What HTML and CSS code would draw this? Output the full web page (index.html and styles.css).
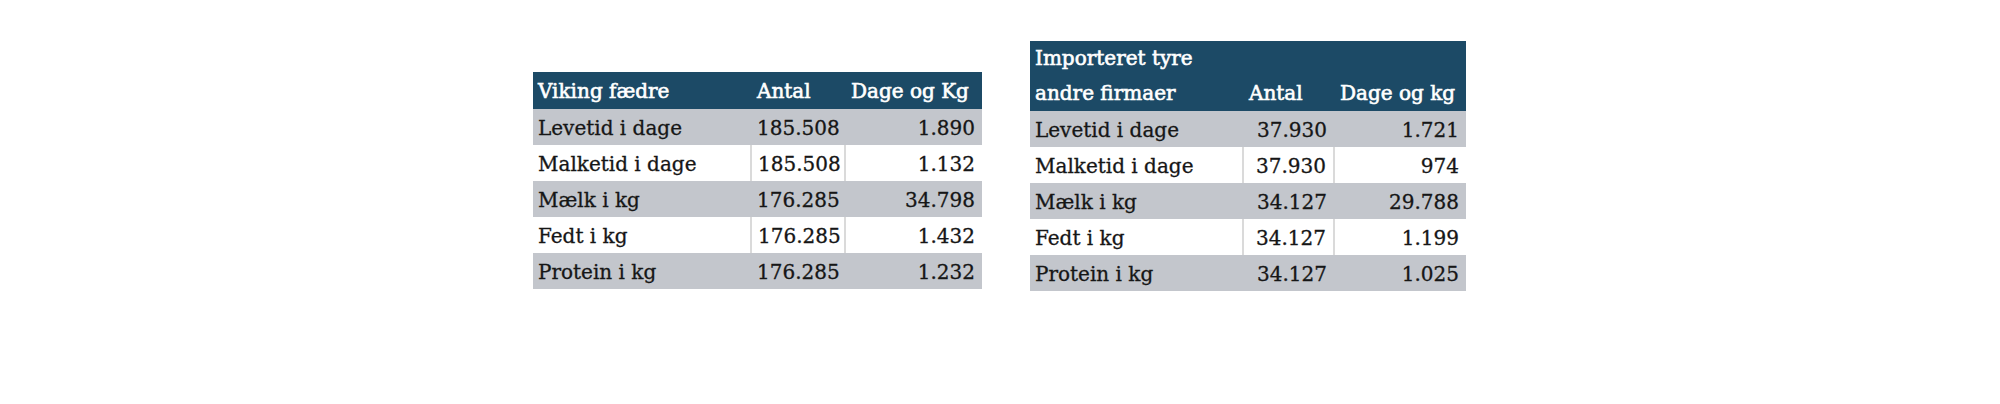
FILE: index.html
```html
<!DOCTYPE html>
<html lang="da">
<head>
<meta charset="utf-8">
<title>Viking fædre</title>
<link rel="stylesheet" href="styles.css">
</head>
<body>
<div class="page">
  <table class="tbl tbl-left">
    <colgroup><col class="c1"><col class="c2"><col class="c3"></colgroup>
    <thead>
      <tr class="head"><th class="lbl">Viking fædre</th><th class="hn">Antal</th><th class="hn">Dage og Kg</th></tr>
    </thead>
    <tbody>
      <tr class="gray"><td class="lbl">Levetid i dage</td><td class="num">185.508</td><td class="num">1.890</td></tr>
      <tr class="white"><td class="lbl">Malketid i dage</td><td class="num">185.508</td><td class="num">1.132</td></tr>
      <tr class="gray"><td class="lbl">Mælk i kg</td><td class="num">176.285</td><td class="num">34.798</td></tr>
      <tr class="white"><td class="lbl">Fedt i kg</td><td class="num">176.285</td><td class="num">1.432</td></tr>
      <tr class="gray"><td class="lbl">Protein i kg</td><td class="num">176.285</td><td class="num">1.232</td></tr>
    </tbody>
  </table>
  <table class="tbl tbl-right">
    <colgroup><col class="d1"><col class="d2"><col class="d3"></colgroup>
    <thead>
      <tr class="head head2"><th class="lbl">Importeret tyre<br>andre firmaer</th><th class="hn">Antal</th><th class="hn">Dage og kg</th></tr>
    </thead>
    <tbody>
      <tr class="gray"><td class="lbl">Levetid i dage</td><td class="num">37.930</td><td class="num">1.721</td></tr>
      <tr class="white"><td class="lbl">Malketid i dage</td><td class="num">37.930</td><td class="num">974</td></tr>
      <tr class="gray"><td class="lbl">Mælk i kg</td><td class="num">34.127</td><td class="num">29.788</td></tr>
      <tr class="white"><td class="lbl">Fedt i kg</td><td class="num">34.127</td><td class="num">1.199</td></tr>
      <tr class="gray"><td class="lbl">Protein i kg</td><td class="num">34.127</td><td class="num">1.025</td></tr>
    </tbody>
  </table>
</div>
</body>
</html>
```
FILE: styles.css
```css
html, body {
  margin: 0;
  padding: 0;
  background: #ffffff;
}
.page {
  width: 2000px;
  height: 404px;
  display: flex;
  align-items: flex-start;
  padding-top: 41px;
  padding-left: 533px;
  gap: 48px;
  box-sizing: border-box;
}
.tbl {
  border-collapse: collapse;
  table-layout: fixed;
  font-family: "DejaVu Serif", "Liberation Serif", serif;
  font-size: 20px;
  color: #161616;
  -webkit-text-stroke: 0.3px #161616;
}
.tbl-left { margin-top: 31px; width: 449px; }
.tbl-right { width: 436px; }
.c1 { width: 218px; }
.c2 { width: 94px; }
.c3 { width: 137px; }
.d1 { width: 213px; }
.d2 { width: 91px; }
.d3 { width: 132px; }
th, td {
  padding: 0 6px;
  white-space: nowrap;
  vertical-align: bottom;
  font-weight: normal;
}
.head th {
  background: #1c4a66;
  color: #ffffff;
  -webkit-text-stroke: 0.6px #ffffff;
  height: 37px;
  line-height: 36px;
  text-align: left;
}
.head2 th { height: 69px; line-height: 35px; }
td { height: 36px; line-height: 34px; }
.lbl { text-align: left; padding-left: 5px; }
.num { text-align: right; padding-right: 7px; }
.hn { padding-left: 6px; padding-right: 4px; }
.gray td { background: #c3c6cc; }
.white td { background: #ffffff; }
.white td + td { border-left: 2px solid #dadada; }
```
